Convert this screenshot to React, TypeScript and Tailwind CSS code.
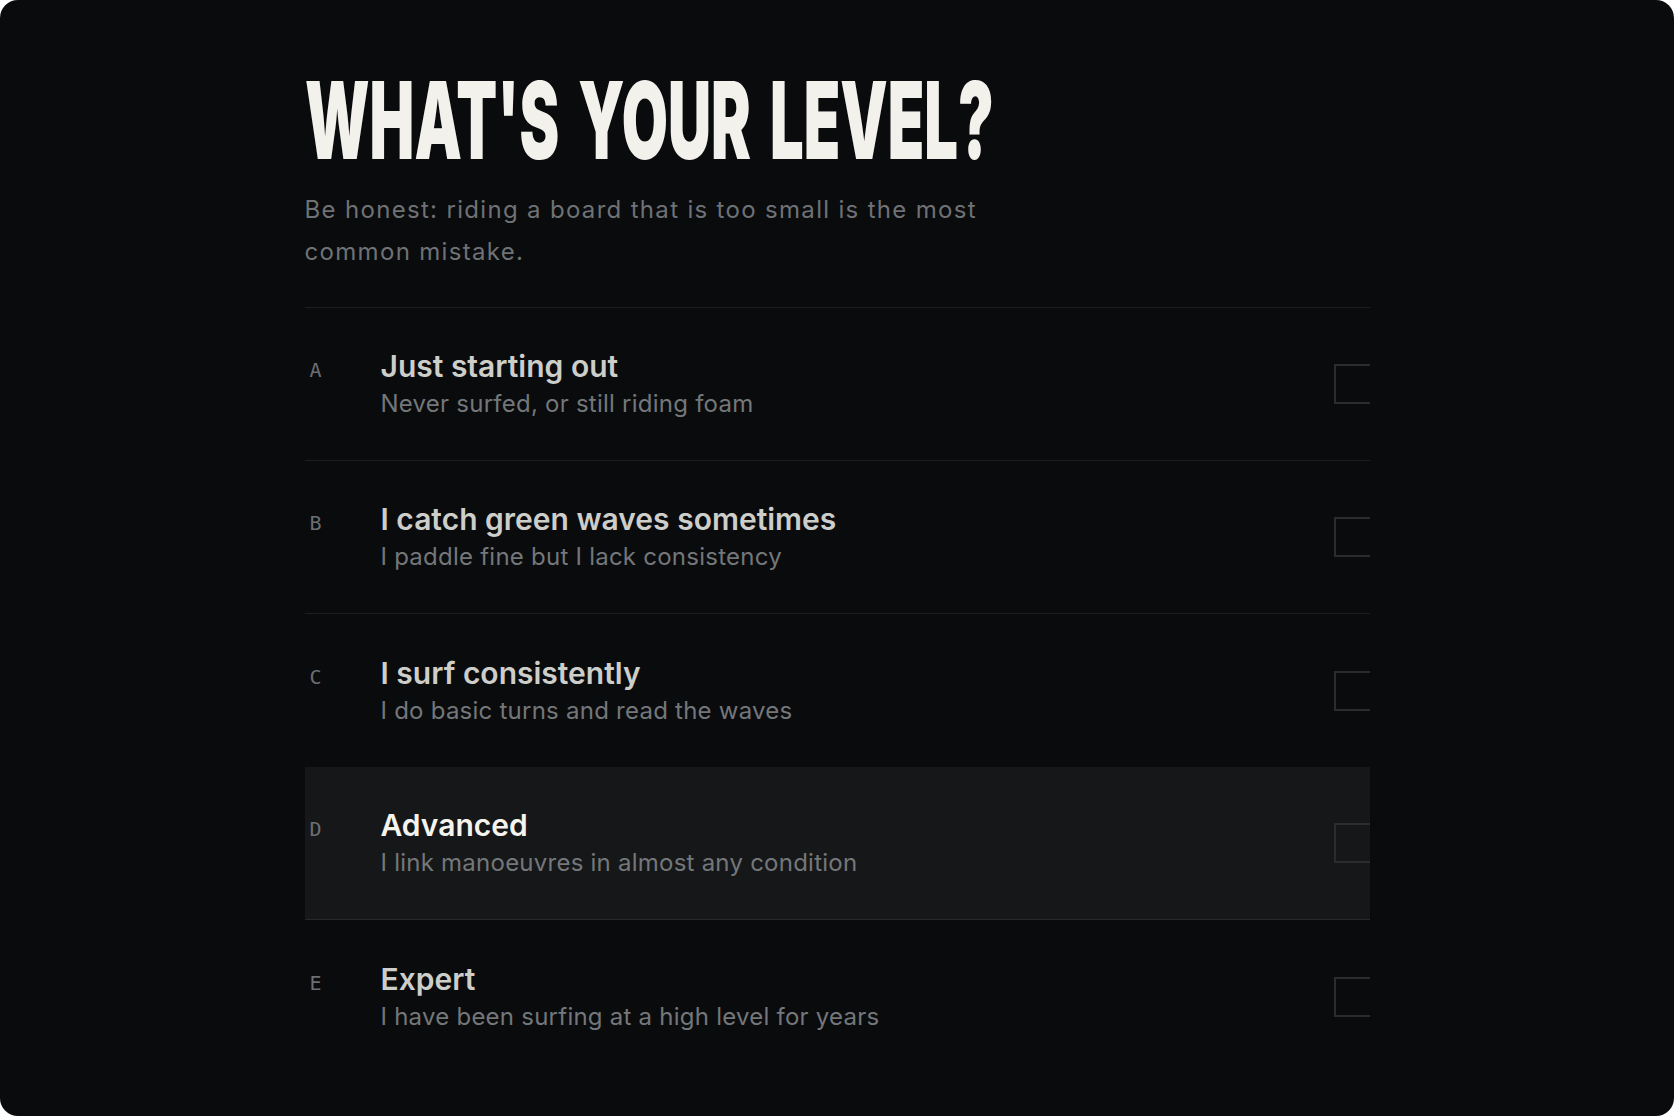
import React from 'react';

type Level = {
  letter: string;
  title: string;
  hint: string;
  active?: boolean;
  border: 'normal' | 'none' | 'active';
};

const LEVELS: Level[] = [
  { letter: 'A', title: 'Just starting out', hint: 'Never surfed, or still riding foam', border: 'normal' },
  { letter: 'B', title: 'I catch green waves sometimes', hint: 'I paddle fine but I lack consistency', border: 'normal' },
  { letter: 'C', title: 'I surf consistently', hint: 'I do basic turns and read the waves', border: 'none' },
  { letter: 'D', title: 'Advanced', hint: 'I link manoeuvres in almost any condition', active: true, border: 'active' },
  { letter: 'E', title: 'Expert', hint: 'I have been surfing at a high level for years', border: 'none' },
];

function LevelRow({ level }: { level: Level }) {
  return (
    <div
      className={`flex h-[153px] items-center overflow-hidden pl-[5px] ${
        level.border !== 'none' ? 'border-b border-white/[0.08]' : ''
      } ${level.active ? 'bg-[#161718]' : ''}`}
    >
      <div className="flex flex-1 items-baseline">
        <span className="w-[71px] shrink-0 font-['DejaVu_Sans_Mono',monospace] text-[20px] text-[#6c6f72]">
          {level.letter}
        </span>
        <div className="flex flex-col">
          <span
            className={`text-[30px] font-semibold leading-[36px] ${
              level.active ? 'text-[#f4f3ee]' : 'text-[#cdcec9]'
            }`}
          >
            {level.title}
          </span>
          <span className="mt-1 text-[24px] leading-[32px] tracking-[0.01em] text-[#74777a]">{level.hint}</span>
        </div>
      </div>
      <div className="mr-[-4px] h-10 w-10 shrink-0 border-2 border-[#2b2c2e]" />
    </div>
  );
}

export default function App() {
  return (
    <div className="min-h-screen bg-white font-['Inter','Noto_Sans',sans-serif]">
      <div className="h-[1116px] overflow-hidden rounded-[18px] bg-[#0a0b0d]">
        <div className="mx-auto w-[1065px] pt-[67px]">
          <h1 className="origin-left scale-x-[0.558] whitespace-nowrap text-[107px] font-black leading-none text-[#f2f1ec] [word-spacing:0.12em]">
            WHAT'S YOUR LEVEL?
          </h1>
          <p className="mt-[15px] max-w-[760px] text-[24px] leading-[42px] tracking-[0.055em] text-[#6f7275]">
            Be honest: riding a board that is too small is the most common mistake.
          </p>
          <div className="mt-[34px] border-t border-white/[0.08]">
            {LEVELS.map((level) => (
              <LevelRow key={level.letter} level={level} />
            ))}
          </div>
        </div>
      </div>
    </div>
  );
}
